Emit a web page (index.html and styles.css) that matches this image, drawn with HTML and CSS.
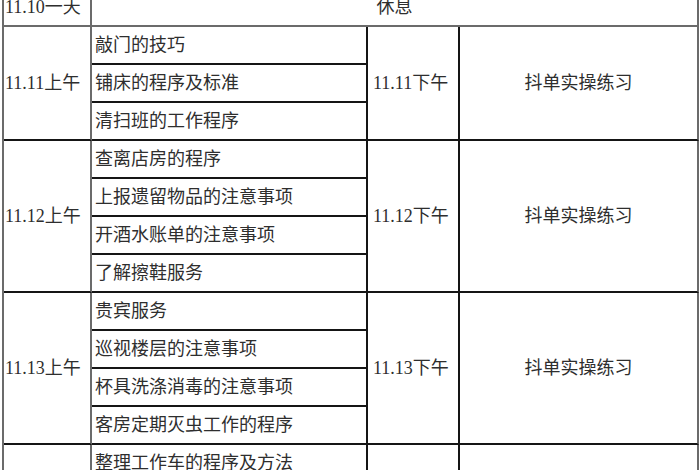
FILE: index.html
```html
<!DOCTYPE html>
<html lang="zh-CN">
<head>
<meta charset="utf-8">
<title>客房部培训安排</title>
<link rel="stylesheet" href="styles.css">
</head>
<body>
<table class="plan">
  <colgroup>
    <col class="w-date">
    <col class="w-topic">
    <col class="w-pm">
    <col class="w-task">
  </colgroup>
  <tbody>
    <tr class="head-row">
      <td class="date">11.10一天</td>
      <td class="rest last" colspan="3">休息</td>
    </tr>

    <tr>
      <td class="date" rowspan="3">11.11上午</td>
      <td class="topic">敲门的技巧</td>
      <td class="pm" rowspan="3">11.11下午</td>
      <td class="task last" rowspan="3">抖单实操练习</td>
    </tr>
    <tr><td class="topic">铺床的程序及标准</td></tr>
    <tr><td class="topic">清扫班的工作程序</td></tr>

    <tr>
      <td class="date" rowspan="4">11.12上午</td>
      <td class="topic">查离店房的程序</td>
      <td class="pm" rowspan="4">11.12下午</td>
      <td class="task last" rowspan="4">抖单实操练习</td>
    </tr>
    <tr><td class="topic">上报遗留物品的注意事项</td></tr>
    <tr><td class="topic">开酒水账单的注意事项</td></tr>
    <tr><td class="topic">了解擦鞋服务</td></tr>

    <tr>
      <td class="date" rowspan="4">11.13上午</td>
      <td class="topic">贵宾服务</td>
      <td class="pm" rowspan="4">11.13下午</td>
      <td class="task last" rowspan="4">抖单实操练习</td>
    </tr>
    <tr><td class="topic">巡视楼层的注意事项</td></tr>
    <tr><td class="topic">杯具洗涤消毒的注意事项</td></tr>
    <tr><td class="topic">客房定期灭虫工作的程序</td></tr>

    <tr>
      <td class="date" rowspan="3"></td>
      <td class="topic">整理工作车的程序及方法</td>
      <td class="pm" rowspan="3"></td>
      <td class="task last" rowspan="3"></td>
    </tr>
    <tr><td class="topic"></td></tr>
    <tr><td class="topic"></td></tr>
  </tbody>
</table>
</body>
</html>
```

FILE: styles.css
```css
html, body {
  margin: 0;
  padding: 0;
  overflow: hidden;
  background: #ffffff;
}

body {
  width: 700px;
  height: 470px;
}

.plan {
  margin: -13px 0 0 2px;
  table-layout: fixed;
  width: 697px;
  border-collapse: separate;
  border-spacing: 0;
  border-left: 2px solid #6b6b6b;
  border-top: 2px solid #6b6b6b;
  font-family: "Liberation Serif", "Noto Sans CJK SC", serif;
  font-size: 18px;
  color: #2e2e2e;
}

.w-date { width: 88px; }
.w-topic { width: 276px; }
.w-pm { width: 92px; }
.w-task { width: 239px; }

.plan td {
  box-sizing: border-box;
  height: 38px;
  padding: 0 3px;
  border-right: 2px solid #151515;
  border-bottom: 2px solid #151515;
  vertical-align: middle;
  white-space: nowrap;
  line-height: 20px;
}

.plan td.date {
  padding-left: 1px;
  border-right-color: #6b6b6b;
}

.plan td.pm {
  padding-left: 5px;
}

.plan td.task,
.plan td.rest {
  text-align: center;
}

.plan td.last {
  border-right-color: #6b6b6b;
}

.head-row td {
  border-bottom-color: #6b6b6b;
}
```
